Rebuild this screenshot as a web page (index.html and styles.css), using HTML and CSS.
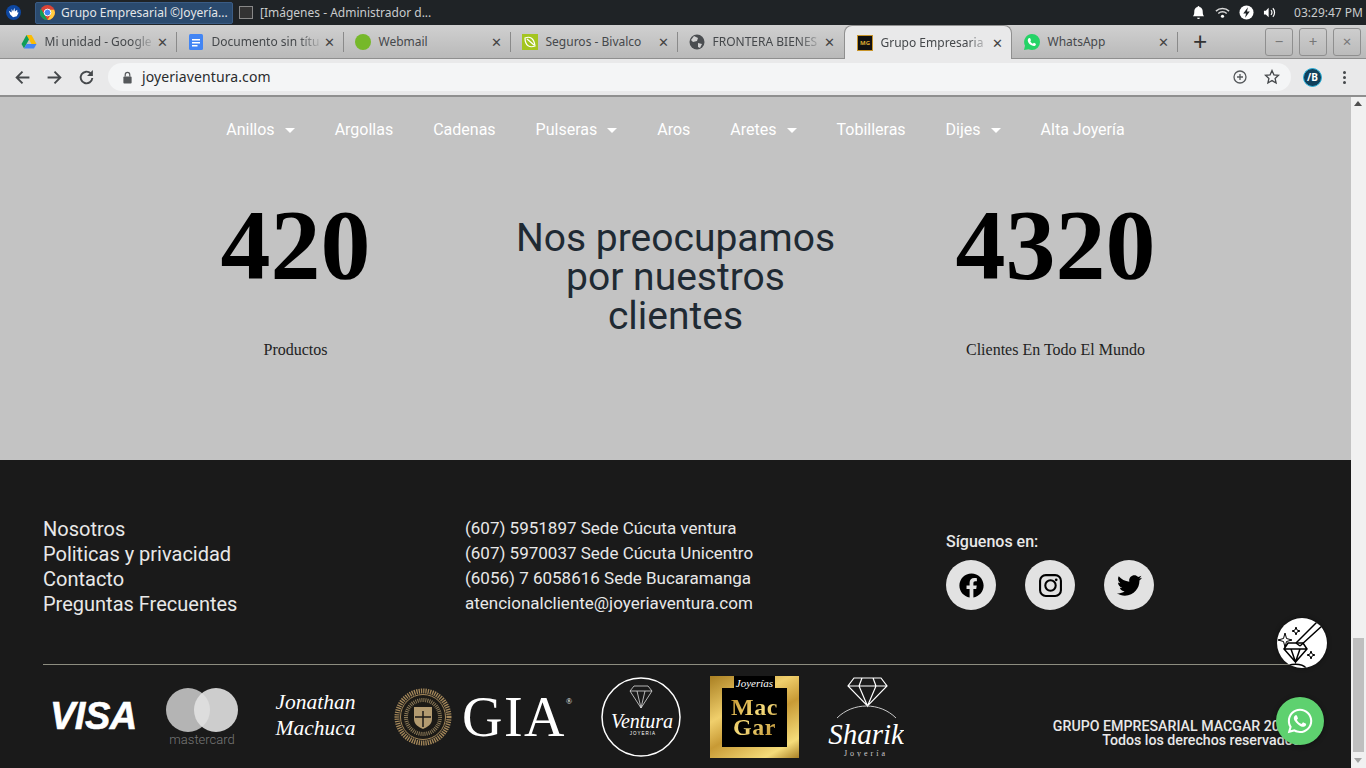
FILE: index.html
```html
<!DOCTYPE html>
<html lang="es">
<head>
    <meta charset="UTF-8">
    <meta name="viewport" content="width=device-width, initial-scale=1.0">
    <title>Grupo Empresarial Joyería Ventura</title>
    <link rel="stylesheet" href="styles.css">
</head>
<body>
    <!-- barra del sistema -->
    <div class="os-bar">
        <svg class="os-logo" viewBox="0 0 16 16"><circle cx="8" cy="8" r="8" fill="#0d47a1"/><path d="M3 6l3 2 0-4 1.500 3L9 3l.5 4L12 5l0 3 1.500 0-2 4-4 1-3-3z" fill="#fff"/></svg>
        <div class="task task-active">
            <svg class="task-icon" viewBox="0 0 16 16"><circle cx="8" cy="8" r="8" fill="#db4437"/><path d="M8 16A8 8 0 0 1 1 4l4 7z" fill="#0f9d58"/><path d="M16 8a8 8 0 0 1-8 8l3.500-6L8 5h7z" fill="#ffcd40"/><circle cx="8" cy="8" r="3.600" fill="#4285f4" stroke="#fff"/></svg>
            <span>Grupo Empresarial ©Joyería...</span>
        </div>
        <div class="task">
            <span class="task-term"></span>
            <span>[Imágenes - Administrador d...</span>
        </div>
        <div class="tray">
            <svg viewBox="0 0 16 16"><path d="M8 1a1 1 0 0 1 1 1c2.500.5 3.500 2.500 3.500 5 0 3 .5 4 1.500 5H2c1-1 1.500-2 1.500-5 0-2.500 1-4.500 3.500-5a1 1 0 0 1 1-1zM6.500 13.500h3a1.500 1.500 0 0 1-3 0z" fill="#fff"/></svg>
            <svg viewBox="0 0 16 16"><path d="M1 6.500a10 10 0 0 1 14 0M3.500 9a6.500 6.500 0 0 1 9 0" fill="none" stroke="#d8d8d8" stroke-width="1.600"/><circle cx="8" cy="12" r="1.700" fill="#fff"/></svg>
            <svg viewBox="0 0 16 16"><circle cx="8" cy="8" r="7.500" fill="#fff"/><path d="M9.500 2.500L4.500 9h3l-1 4.500L11.500 7h-3z" fill="#1f2326"/></svg>
            <svg viewBox="0 0 16 16"><path d="M1 6h2l3-3v10l-3-3H1z" fill="#fff"/><path d="M8.500 5.500a3.500 3.500 0 0 1 0 5M10.500 3.500a6.500 6.500 0 0 1 0 9" fill="none" stroke="#fff" stroke-width="1.300"/></svg>
            <span class="clock">03:29:47 PM</span>
        </div>
    </div>

    <!-- pestañas -->
    <div class="tabstrip">
        <div class="tab">
            <svg class="fav" viewBox="0 0 16 16"><path d="M5.500 1h5l5 9h-5z" fill="#fbbc04"/><path d="M5.500 1L.5 10l2.500 4.500L8 5.500z" fill="#0f9d58"/><path d="M3 14.500h10l2.500-4.500h-10z" fill="#4285f4"/></svg>
            <span class="tab-title">Mi unidad - Google</span><span class="tab-x">✕</span>
        </div>
        <div class="tab">
            <svg class="fav" viewBox="0 0 16 16"><rect x="1" width="14" height="16" rx="1.500" fill="#4285f4"/><path d="M4 5h8v1.500H4zM4 8h8v1.500H4zM4 11h5.500v1.500H4z" fill="#fff"/></svg>
            <span class="tab-title">Documento sin títu</span><span class="tab-x">✕</span>
        </div>
        <div class="tab">
            <svg class="fav" viewBox="0 0 16 16"><circle cx="8" cy="8" r="8" fill="#76b82a"/></svg>
            <span class="tab-title">Webmail</span><span class="tab-x">✕</span>
        </div>
        <div class="tab">
            <svg class="fav" viewBox="0 0 16 16"><rect width="16" height="16" fill="#a4c520"/><path d="M3 4c5-2 9 0 10 8-5 2-10 0-10-8zM5 5l7 6" fill="none" stroke="#fff" stroke-width="1.200"/></svg>
            <span class="tab-title">Seguros - Bivalco</span><span class="tab-x">✕</span>
        </div>
        <div class="tab tab-last">
            <svg class="fav" viewBox="0 0 16 16"><circle cx="8" cy="8" r="7.500" fill="#4a4d50"/><path d="M5 2l4 2-1 3-4 1-2-2zM9 9l4 1-2 4-2-1z" fill="#d0d0d0"/></svg>
            <span class="tab-title">FRONTERA BIENES</span><span class="tab-x">✕</span>
        </div>
        <div class="tab tab-active">
            <span class="fav fav-mac">MG</span>
            <span class="tab-title">Grupo Empresaria</span><span class="tab-x">✕</span>
        </div>
        <div class="tab tab-wa">
            <svg class="fav" viewBox="0 0 16 16"><path d="M8 0a8 8 0 0 1 0 16 8 8 0 0 1-3.500-.800L0 16l1-4.300A8 8 0 0 1 8 0z" fill="#25d366"/><path d="M5.500 4c1 0 1 1.500 1.500 2.300l-.7 1c.6 1.200 1.400 1.900 2.600 2.400l1-.9c.8.400 2.100.800 2 1.600-.3 1.300-2 1.800-3 1.400C6 11 4.300 9.200 3.800 7 3.600 5.700 4.300 4.200 5.500 4z" fill="#fff"/></svg>
            <span class="tab-title">WhatsApp</span><span class="tab-x">✕</span>
        </div>
        <span class="tab-new">+</span>
        <div class="win-btns">
            <span class="win-btn">−</span>
            <span class="win-btn">+</span>
            <span class="win-btn">×</span>
        </div>
    </div>

    <!-- barra de dirección -->
    <div class="toolbar">
        <svg class="tool-icon" viewBox="0 0 16 16"><path d="M14.500 8H2.500M8 2.500L2.500 8 8 13.500" fill="none" stroke="#45484b" stroke-width="1.800"/></svg>
        <svg class="tool-icon" viewBox="0 0 16 16"><path d="M1.500 8h12M8 2.500L13.500 8 8 13.500" fill="none" stroke="#45484b" stroke-width="1.800"/></svg>
        <svg class="tool-icon" viewBox="0 0 16 16"><path d="M13.500 8.500A5.500 5.500 0 1 1 12 4.200" fill="none" stroke="#45484b" stroke-width="1.800"/><path d="M14 1v5.500H8.500z" fill="#45484b"/></svg>
        <div class="omnibox">
            <svg class="lock" viewBox="0 0 12 14"><path d="M3.500 6V4a2.500 2.500 0 0 1 5 0v2" fill="none" stroke="#55585b" stroke-width="1.300"/><rect x="1.500" y="6" width="9" height="7.500" rx="1" fill="#55585b"/></svg>
            <span class="url">joyeriaventura.com</span>
            <svg class="omni-icon" viewBox="0 0 16 16"><circle cx="8" cy="8" r="6" fill="none" stroke="#55585b" stroke-width="1.300"/><path d="M8 5v6M5 8h6" stroke="#55585b" stroke-width="1.300"/></svg>
            <svg class="omni-icon" viewBox="0 0 16 16"><path d="M8 1.500l1.900 4.300 4.600.5-3.400 3.100 1 4.600L8 11.600l-4.100 2.400 1-4.600L1.500 6.300l4.600-.5z" fill="none" stroke="#45484b" stroke-width="1.300"/></svg>
        </div>
        <span class="profile">/B</span>
        <span class="menu-dots"><i></i><i></i><i></i></span>
    </div>

    <div class="viewport">
        <div class="page">
            <section class="main">
                <nav class="menu">
                    <a class="caret">Anillos</a>
                    <a>Argollas</a>
                    <a>Cadenas</a>
                    <a class="caret">Pulseras</a>
                    <a>Aros</a>
                    <a class="caret">Aretes</a>
                    <a>Tobilleras</a>
                    <a class="caret">Dijes</a>
                    <a>Alta Joyería</a>
                </nav>
                <div class="stats">
                    <div class="stat">
                        <div class="stat-num">420</div>
                        <div class="stat-label">Productos</div>
                    </div>
                    <h2 class="stat-title">Nos preocupamos por nuestros clientes</h2>
                    <div class="stat">
                        <div class="stat-num">4320</div>
                        <div class="stat-label">Clientes En Todo El Mundo</div>
                    </div>
                </div>
            </section>

            <footer class="footer">
                <div class="foot-top">
                    <div class="foot-links">
                        <a>Nosotros</a>
                        <a>Politicas y privacidad</a>
                        <a>Contacto</a>
                        <a>Preguntas Frecuentes</a>
                    </div>
                    <div class="foot-contact">
                        <a>(607) 5951897 Sede Cúcuta ventura</a>
                        <a>(607) 5970037 Sede Cúcuta Unicentro</a>
                        <a>(6056) 7 6058616 Sede Bucaramanga</a>
                        <a>atencionalcliente@joyeriaventura.com</a>
                    </div>
                    <div class="foot-social">
                        <div class="social-title">Síguenos en:</div>
                        <div class="social-row">
                            <span class="social"><svg viewBox="0 0 512 512"><path d="M504 256C504 119 393 8 256 8S8 119 8 256c0 123.780 90.690 226.380 209.250 245V327.690h-63V256h63v-54.640c0-62.150 37-96.480 93.670-96.480 27.140 0 55.520 4.840 55.520 4.840v61h-31.280c-30.800 0-40.410 19.120-40.410 38.730V256h68.780l-11 71.690h-57.780V501C413.310 482.380 504 379.780 504 256z"/></svg></span>
                            <span class="social"><svg viewBox="0 0 24 24"><rect x="2" y="2" width="20" height="20" rx="5.500" fill="none" stroke="#000" stroke-width="2"/><circle cx="12" cy="12" r="5" fill="none" stroke="#000" stroke-width="2"/><circle cx="17.500" cy="6.500" r="1.300"/></svg></span>
                            <span class="social"><svg viewBox="0 0 512 512"><path d="M459.370 151.716c.325 4.548.325 9.097.325 13.645 0 138.720-105.583 298.558-298.558 298.558-59.452 0-114.680-17.219-161.137-47.106 8.447.974 16.568 1.299 25.340 1.299 49.055 0 94.213-16.568 130.274-44.832-46.132-.975-84.792-31.188-98.112-72.772 6.498.974 12.995 1.624 19.818 1.624 9.421 0 18.843-1.300 27.614-3.573-48.081-9.747-84.143-51.980-84.143-102.985v-1.299c13.969 7.797 30.214 12.670 47.431 13.319-28.264-18.843-46.781-51.005-46.781-87.391 0-19.492 5.197-37.360 14.294-52.954 51.655 63.675 129.300 105.258 216.365 109.807-1.624-7.797-2.599-15.918-2.599-24.040 0-57.828 46.782-104.934 104.934-104.934 30.213 0 57.502 12.670 76.670 33.137 23.715-4.548 46.456-13.320 66.599-25.340-7.798 24.366-24.366 44.833-46.132 57.827 21.117-2.273 41.584-8.122 60.426-16.243-14.292 20.791-32.161 39.308-52.628 54.253z"/></svg></span>
                        </div>
                    </div>
                </div>
                <hr class="foot-line">
                <div class="foot-bottom">
                    <div class="logos">
                        <span class="logo-visa">VISA</span>
                        <div class="logo-mc">
                            <div class="mc-rings"><i></i><i></i></div>
                            <span>mastercard</span>
                        </div>
                        <div class="logo-jm">Jonathan<br>Machuca</div>
                        <svg class="logo-seal" viewBox="0 0 58 58">
                            <circle cx="29" cy="29" r="26" fill="none" stroke="#a5885a" stroke-width="5" stroke-dasharray="1.300 1"/>
                            <circle cx="29" cy="29" r="22.500" fill="#1c1a16" stroke="#a5885a" stroke-width="1"/>
                            <circle cx="29" cy="29" r="17" fill="none" stroke="#8c7a58" stroke-width="4" stroke-dasharray="1 1"/>
                            <path d="M20 19h18v12c0 6-5 8-9 10-4-2-9-4-9-10z" fill="#b39b70"/>
                            <path d="M29 23v16M21 29h16" stroke="#1c1a16" stroke-width="1.500"/>
                        </svg>
                        <div class="logo-gia">GIA<sup>®</sup></div>
                        <svg class="logo-ventura" viewBox="0 0 80 80">
                            <circle cx="40" cy="40" r="39" fill="none" stroke="#fff" stroke-width="1.500"/>
                            <path d="M29 14l4-5h14l4 5-11 17zM29 14h22M36 14l4 17 4-17" fill="none" stroke="#ddd" stroke-width=".8"/>
                            <text x="41" y="51" text-anchor="middle" class="ventura-name">Ventura</text>
                            <text x="42" y="58" text-anchor="middle" class="ventura-sub">JOYERIA</text>
                        </svg>
                        <div class="logo-mac">
                            <span class="mac-top">Joyerías</span>
                            <div class="mac-inner"><span class="mac-name">Mac<br>Gar</span></div>
                        </div>
                        <svg class="logo-sharik" viewBox="0 0 76 80">
                            <path d="M26 1h27l6 8-19.500 20L20 9zM20 9h39M31 9l8.500 20L48 9M31 9l3-8M48 9l-3-8" fill="none" stroke="#fff" stroke-width="1.200"/>
                            <path d="M9 41c16-16 43-16 59 0" fill="none" stroke="#ddd" stroke-width=".9"/>
                            <text x="38" y="67" text-anchor="middle" class="sharik-name">Sharik</text>
                            <text x="38" y="79" text-anchor="middle" class="sharik-sub">Joyería</text>
                        </svg>
                    </div>
                    <div class="copy">GRUPO EMPRESARIAL MACGAR 2021.<br>Todos los derechos reservados</div>
                </div>
            </footer>

            <span class="float-gem">
                <svg viewBox="0 0 50 50">
                    <path d="M19 25L41 3M23 28L46 7M19 25l4 3" fill="none" stroke="#000" stroke-width="1.500"/>
                    <path d="M7 31l4-6h15l4 6-11.500 13zM7 31h23M14 31l4.500 13L23 31" fill="none" stroke="#000" stroke-width="1.500"/>
                    <path d="M8 15l1.500 5.500L15 22l-5.500 1.500L8 29l-1.500-5.500L1 22l5.500-1.500zM34 33l1 3 3 1-3 1-1 3-1-3-3-1 3-1zM19 9l1 3 3 1-3 1-1 3-1-3-3-1 3-1z" fill="none" stroke="#000"/>
                    <path d="M8 50c4-5 17-5 21 0" fill="none" stroke="#000" stroke-width="1.500"/>
                </svg>
            </span>
            <span class="float-wa">
                <svg viewBox="0 0 448 512"><path d="M380.900 97.100C339 55.100 283.200 32 223.900 32c-122.400 0-222 99.600-222 222 0 39.100 10.200 77.300 29.600 111L0 480l117.700-30.900c32.400 17.700 68.900 26.700 106.100 26.700h.1c122.300 0 224.100-99.600 224.100-222 0-59.300-25.200-115-67.100-157zm-157 341.600c-33.200 0-65.700-8.900-94-25.700l-6.700-4-69.800 18.300L72 359.200l-4.400-7c-18.500-29.400-28.200-63.300-28.200-98.200 0-101.700 82.800-184.500 184.600-184.500 49.300 0 95.600 19.200 130.400 54.100 34.800 34.900 56.200 81.200 56.100 130.500 0 101.800-84.900 184.600-186.600 184.600zm101.200-138.200c-5.500-2.800-32.800-16.200-37.900-18-5.100-1.900-8.800-2.800-12.500 2.800-3.700 5.600-14.300 18-17.600 21.800-3.200 3.700-6.500 4.200-12 1.400-32.600-16.300-54-29.100-75.500-66-5.700-9.800 5.700-9.100 16.300-30.300 1.800-3.700.9-6.900-.5-9.700-1.400-2.800-12.500-30.100-17.100-41.200-4.500-10.800-9.100-9.300-12.500-9.500-3.200-.2-6.900-.2-10.600-.2-3.700 0-9.700 1.400-14.800 6.900-5.100 5.600-19.400 19-19.400 46.300 0 27.300 19.900 53.700 22.600 57.400 2.800 3.700 39.100 59.700 94.800 83.800 35.200 15.200 49 16.500 66.600 13.900 10.700-1.600 32.800-13.400 37.400-26.400 4.600-13 4.600-24.100 3.200-26.400-1.300-2.500-5-3.900-10.500-6.600z"/></svg>
            </span>
        </div>
        <div class="scrollbar">
            <span class="arrow-up"></span>
            <span class="thumb"></span>
            <span class="arrow-down"></span>
        </div>
    </div>
</body>
</html>
```

FILE: styles.css
```css
html, body {
    margin: 0;
    padding: 0;
    height: 100%;
    overflow: hidden;
}
body {
    display: flex;
    flex-direction: column;
    height: 768px;
    font-family: "Noto Sans", sans-serif;
    font-size: 12px;
}

/* barra del sistema */
.os-bar {
    display: flex;
    align-items: center;
    height: 25px;
    background-color: #1f2326;
    color: #c9cbcd;
    padding-left: 6px;
    flex: none;
    box-sizing: border-box;
}
.os-logo {
    width: 15px;
    height: 15px;
    margin-right: 14px;
}
.task {
    display: flex;
    align-items: center;
    height: 22px;
    box-sizing: border-box;
    padding-left: 5px;
    white-space: nowrap;
}
.task-active {
    width: 198px;
    padding-left: 4px;
    background-color: #2a4a6e;
    border: 1px solid #3a5c85;
    border-radius: 2px;
    color: #e4e6e8;
    margin-right: 1px;
}
.task-icon {
    width: 15px;
    height: 15px;
    margin-right: 6px;
}
.task-term {
    width: 14px;
    height: 13px;
    box-sizing: border-box;
    background-color: #333;
    border: 1px solid #888;
    margin-right: 7px;
}
.tray {
    display: flex;
    align-items: center;
    margin-left: auto;
    padding-right: 3px;
}
.tray svg {
    width: 15px;
    height: 15px;
    margin-right: 9px;
}
.clock {
    margin-left: 7px;
    font-size: 12px;
}

/* pestañas */
.tabstrip {
    display: flex;
    align-items: flex-end;
    height: 34px;
    padding-left: 10px;
    background: linear-gradient(#d0d0d0, #b9b9b9);
    border-bottom: 1px solid #8f8f8f;
    box-sizing: border-box;
    flex: none;
    color: #45484b;
}
.tab {
    position: relative;
    display: flex;
    align-items: center;
    width: 167px;
    height: 33px;
    padding: 0 9px 0 11px;
    box-sizing: border-box;
}
.tab::after {
    content: "";
    position: absolute;
    right: 0;
    top: 7px;
    height: 20px;
    width: 1px;
    background-color: #8a8a8a;
}
.tab-last {
    width: 166px;
}
.tab-last::after, .tab-active::after {
    display: none;
}
.tab-active {
    width: 168px;
    margin-bottom: -1px;
    height: 34px;
    padding: 0 8px 0 12px;
    background-color: #e9e9ea;
    border: 1px solid #8f8f8f;
    border-bottom: none;
    border-radius: 8px 8px 0 0;
}
.tab-wa {
    width: 166px;
    padding-left: 12px;
}
.fav {
    width: 16px;
    height: 16px;
    margin-right: 7.500px;
    flex: none;
}
.fav-mac {
    background-color: #111;
    color: #d9a92f;
    border: 1px solid #c9952a;
    box-sizing: border-box;
    font-size: 6px;
    line-height: 14px;
    text-align: center;
    font-weight: bold;
}
.tab-title {
    flex: 1;
    white-space: nowrap;
    -webkit-mask-image: linear-gradient(to right, #000 78%, transparent 100%);
    mask-image: linear-gradient(to right, #000 78%, transparent 100%);
}
.tab-wa .tab-title, .tab:nth-child(3) .tab-title, .tab:nth-child(4) .tab-title {
    -webkit-mask-image: none;
    mask-image: none;
}
.tab-x {
    width: 12px;
    font-size: 13px;
    text-align: center;
    color: #444;
}
.tab-new {
    font-size: 25px;
    line-height: 33px;
    height: 33px;
    margin-left: 15px;
    color: #333;
}
.win-btns {
    display: flex;
    gap: 6px;
    margin-left: auto;
    margin-right: 5px;
    align-self: center;
}
.win-btn {
    width: 28px;
    height: 28px;
    box-sizing: border-box;
    border: 1px solid #8f8f8f;
    border-radius: 3px;
    text-align: center;
    line-height: 25px;
    font-size: 15px;
    color: #777;
}

/* barra de dirección */
.toolbar {
    display: flex;
    align-items: center;
    height: 38px;
    background-color: #e9e9ea;
    border-bottom: 2px solid #8f8f8f;
    box-sizing: border-box;
    flex: none;
    padding-left: 14px;
}
.tool-icon {
    width: 17px;
    height: 17px;
    margin-right: 15px;
}
.omnibox {
    display: flex;
    align-items: center;
    width: 1183px;
    height: 28px;
    margin-left: -2px;
    padding: 0 11px 0 14px;
    border-radius: 14px;
    background-color: #f4f5f6;
    box-sizing: border-box;
}
.lock {
    width: 11px;
    height: 13px;
    margin-right: 9px;
}
.url {
    flex: 1;
    font-size: 14px;
    line-height: 18px;
    letter-spacing: 0.1px;
    color: #2a2c2e;
}
.omni-icon {
    width: 16px;
    height: 16px;
    margin-left: 16px;
}
.profile {
    width: 19px;
    height: 19px;
    margin-left: 12px;
    border-radius: 50%;
    background-color: #10405c;
    border: 1px solid #2bb0d8;
    box-sizing: border-box;
    color: #fff;
    font-size: 10px;
    font-weight: bold;
    line-height: 17px;
    text-align: center;
}
.menu-dots {
    display: flex;
    flex-direction: column;
    gap: 2px;
    margin-left: 21px;
}
.menu-dots i {
    width: 3px;
    height: 3px;
    border-radius: 50%;
    background-color: #45484b;
}

/* contenido */
.viewport {
    display: flex;
    flex: 1;
    min-height: 0;
}
.page {
    position: relative;
    flex: 1;
    overflow: hidden;
    display: flex;
    flex-direction: column;
}
.main {
    height: 363px;
    background-color: #c3c3c3;
    flex: none;
}
.menu {
    display: flex;
    justify-content: center;
    gap: 40px;
    padding-top: 23px;
    height: 42px;
    font-family: Roboto, sans-serif;
    font-size: 16px;
    line-height: 19px;
    color: #fff;
}
.menu .caret::after {
    content: "";
    display: inline-block;
    margin-left: 10px;
    vertical-align: 2px;
    border-left: 5px solid transparent;
    border-right: 5px solid transparent;
    border-top: 5px solid #fff;
}
.stats {
    display: grid;
    grid-template-columns: repeat(3, 380px);
    justify-content: center;
    text-align: center;
    padding-top: 27px;
}
.stat-num {
    font-family: "Liberation Serif", serif;
    font-weight: bold;
    font-size: 100px;
    line-height: 112px;
    color: #000;
}
.stat-label {
    margin-top: 40px;
    font-family: "Liberation Serif", serif;
    font-size: 16px;
    line-height: 18px;
    color: #222;
}
.stat-title {
    margin: 30px 30px 0;
    font-family: Roboto, sans-serif;
    font-weight: 400;
    font-size: 39px;
    line-height: 39px;
    color: #1f2a33;
}

/* pie de página */
.footer {
    flex: 1;
    background-color: #1a1a1a;
    color: #e8e8e8;
    font-family: Roboto, sans-serif;
    padding: 57px 51px 0 43px;
}
.foot-top {
    display: flex;
    height: 147px;
}
.foot-links {
    width: 422px;
    display: flex;
    flex-direction: column;
    font-size: 20px;
    line-height: 25px;
}
.foot-contact {
    width: 481px;
    display: flex;
    flex-direction: column;
    margin-top: -1px;
    font-size: 17px;
    line-height: 25px;
}
.foot-social {
    padding-top: 15px;
}
.social-title {
    font-size: 16px;
    font-weight: 500;
    line-height: 19px;
    margin-bottom: 9px;
}
.social-row {
    display: flex;
    gap: 29px;
}
.social {
    display: flex;
    align-items: center;
    justify-content: center;
    width: 50px;
    height: 50px;
    border-radius: 50%;
    background-color: #e2e2e2;
}
.social svg {
    width: 25px;
    height: 25px;
}
.foot-line {
    margin: 0;
    border: none;
    border-top: 1px solid #8d8d80;
}
.foot-bottom {
    position: relative;
    display: flex;
    align-items: flex-start;
    justify-content: space-between;
    padding-top: 10px;
}
.logos {
    display: flex;
    align-items: center;
    height: 83px;
    padding-left: 7px;
}
.logo-visa {
    width: 85px;
    font-family: "Liberation Sans", sans-serif;
    font-weight: bold;
    font-style: italic;
    font-size: 38px;
    letter-spacing: -0.5px;
    -webkit-text-stroke: 0.6px #fff;
    color: #fff;
    margin-right: 31px;
}
.logo-mc {
    width: 72px;
    margin-right: 37px;
    margin-top: 2px;
    text-align: center;
}
.mc-rings {
    display: flex;
    height: 44px;
}
.mc-rings i {
    width: 44px;
    height: 44px;
    border-radius: 50%;
    background-color: #b4b4b4;
}
.mc-rings i + i {
    margin-left: -16px;
    background-color: rgba(225, 225, 225, 0.9);
}
.logo-mc span {
    display: block;
    font-size: 13px;
    font-weight: 300;
    line-height: 14px;
    margin-top: 1px;
    color: #777;
}
.logo-jm {
    width: 81px;
    margin-right: 38px;
    margin-top: -3px;
    font-family: "Liberation Serif", serif;
    font-style: italic;
    font-size: 21.500px;
    line-height: 26px;
    text-align: center;
    color: #fff;
    white-space: nowrap;
}
.logo-seal {
    width: 58px;
    height: 58px;
    margin-right: 10px;
}
.logo-gia {
    width: 110px;
    margin-right: 29px;
    font-family: "Liberation Serif", serif;
    font-size: 56px;
    letter-spacing: 1.500px;
    line-height: 56px;
    color: #fff;
    white-space: nowrap;
}
.logo-gia sup {
    font-size: 8px;
    vertical-align: 32px;
    line-height: 0;
    letter-spacing: 0;
}
.logo-ventura {
    width: 80px;
    height: 80px;
    margin-right: 29px;
}
.ventura-name {
    font-family: "Liberation Serif", serif;
    font-style: italic;
    font-size: 20px;
    fill: #fff;
}
.ventura-sub {
    font-family: "Liberation Sans", sans-serif;
    font-size: 4.500px;
    letter-spacing: 1px;
    fill: #fff;
}
.logo-mac {
    position: relative;
    width: 89px;
    height: 82px;
    margin-right: 29px;
    box-sizing: border-box;
    padding: 12px 12px 11px;
    background: linear-gradient(150deg, #a97f22, #f0cf6c 35%, #c89a35 55%, #f5dc7a 85%, #a87f25);
}
.mac-top {
    position: absolute;
    top: 0;
    left: 24px;
    width: 41px;
    height: 14px;
    background-color: #000;
    font-family: "Liberation Serif", serif;
    font-style: italic;
    font-size: 11px;
    line-height: 14px;
    text-align: center;
    color: #fff;
}
.mac-inner {
    height: 100%;
    background-color: #000;
    font-family: "Liberation Serif", serif;
    font-weight: bold;
    font-size: 24px;
    letter-spacing: 0.5px;
    line-height: 20px;
    padding-top: 9px;
    box-sizing: border-box;
    text-align: center;
}
.mac-name {
    display: inline-block;
    background: linear-gradient(135deg, #c8962e, #f6dc7c 50%, #bb8a2a);
    -webkit-background-clip: text;
    background-clip: text;
    color: transparent;
}
.logo-sharik {
    width: 76px;
    height: 80px;
}
.sharik-name {
    font-family: "Liberation Serif", serif;
    font-style: italic;
    font-size: 29px;
    fill: #fff;
}
.sharik-sub {
    font-family: "Liberation Serif", serif;
    font-size: 8px;
    letter-spacing: 3px;
    fill: #ccc;
}
.copy {
    padding-top: 44px;
    font-size: 14.200px;
    font-weight: 500;
    line-height: 14px;
    text-align: right;
    color: #e8e8e8;
}

/* botones flotantes */
.float-gem {
    position: absolute;
    left: 1277px;
    top: 521px;
    width: 50px;
    height: 50px;
    border-radius: 50%;
    background-color: #fff;
    overflow: hidden;
    box-shadow: 0 0 4px rgba(0, 0, 0, 0.5);
}
.float-gem svg {
    display: block;
    width: 50px;
    height: 50px;
}
.float-wa {
    position: absolute;
    left: 1276px;
    top: 600px;
    width: 48px;
    height: 48px;
    border-radius: 50%;
    background-color: #5ed16f;
    display: flex;
    align-items: center;
    justify-content: center;
    box-shadow: 0 1px 5px rgba(0, 0, 0, 0.4);
}
.float-wa svg {
    width: 28px;
    height: 28px;
    fill: #fff;
}

/* barra de desplazamiento */
.scrollbar {
    position: relative;
    width: 15px;
    flex: none;
    background-color: #f1f1f1;
}
.thumb {
    position: absolute;
    left: 2px;
    top: 541px;
    width: 11px;
    height: 114px;
    background-color: #bfbfbf;
}
.arrow-up, .arrow-down {
    position: absolute;
    left: 3px;
    border-left: 4.500px solid transparent;
    border-right: 4.500px solid transparent;
}
.arrow-up {
    top: 4px;
    border-bottom: 5px solid #505050;
}
.arrow-down {
    bottom: 5px;
    border-top: 5px solid #a3a3a3;
}
```
